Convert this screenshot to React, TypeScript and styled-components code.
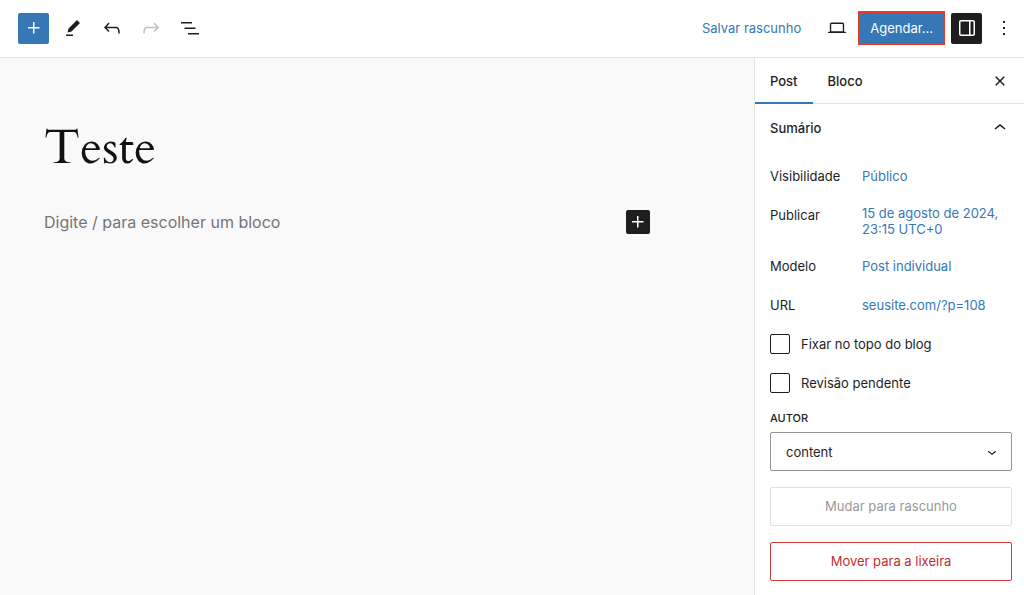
import React from "react";
import styled, { createGlobalStyle, css } from "styled-components";

const blue = "#3578b5";
const ink = "#1e1e1e";
const line = "#e4e4e4";

const GlobalStyle = createGlobalStyle`
  *, *::before, *::after { box-sizing: border-box; }
  body {
    margin: 0;
    background: #f9f9f9;
    color: ${ink};
    font-family: Inter, "Liberation Sans", sans-serif;
    font-size: 13px;
    line-height: 16px;
  }
  button, input, select { font: inherit; color: inherit; }
`;

const Page = styled.div`
  display: flex;
  flex-direction: column;
  min-height: 100vh;
`;

const TopBar = styled.header`
  display: flex;
  align-items: center;
  justify-content: space-between;
  padding: 11px 5px 12px 18px;
  background: #fff;
  border-bottom: 1px solid ${line};
`;

const Tools = styled.div`
  display: flex;
  align-items: center;
  gap: 8px;
`;

const Actions = styled.div`
  display: flex;
  align-items: center;
  gap: 6px;
`;

const IconButton = styled.button<{ $tone?: "primary" | "dark"; $small?: boolean }>`
  display: flex;
  align-items: center;
  justify-content: center;
  flex: none;
  width: ${(p) => (p.$small ? 24 : 31)}px;
  height: ${(p) => (p.$small ? 24 : 31)}px;
  padding: 0;
  border: 0;
  border-radius: 2px;
  background: ${(p) => (p.$tone === "primary" ? blue : p.$tone === "dark" ? ink : "transparent")};
  color: ${(p) => (p.$tone ? "#fff" : ink)};
  &:disabled { color: #c0c0c0; }
`;

const TextButton = styled.button`
  padding: 0 14px;
  border: 0;
  background: none;
  color: ${blue};
  line-height: 32px;
`;

const ScheduleButton = styled.button`
  padding: 0 10px;
  border: 2px solid #ee3a24;
  background: ${blue};
  color: #fff;
  line-height: 30px;
`;

const Workspace = styled.div`
  display: flex;
  flex: 1;
`;

const Canvas = styled.main`
  flex: 1;
  min-width: 0;
  padding: 60px 104px 40px 44px;
`;

const Title = styled.h1`
  margin: 0 0 32px;
  color: #111;
  font-family: Cardo, "Liberation Serif", serif;
  font-size: 49px;
  font-weight: 400;
  line-height: 60px;
`;

const BlockRow = styled.div`
  display: flex;
  align-items: center;
  gap: 16px;
`;

const BlockInput = styled.input`
  flex: 1;
  min-width: 0;
  padding: 0;
  border: 0;
  outline: 0;
  background: none;
  font-size: 16px;
  line-height: 24px;
  &::placeholder { color: #757575; opacity: 1; }
`;

const Sidebar = styled.aside`
  flex: none;
  width: 270px;
  background: #fff;
  border-left: 1px solid ${line};
`;

const TabBar = styled.div`
  display: flex;
  align-items: stretch;
  height: 46px;
  padding-right: 12px;
  border-bottom: 1px solid ${line};
`;

const Tab = styled.button<{ $active?: boolean }>`
  margin-bottom: -1px;
  padding: 0 15px;
  border: 0;
  background: none;
  font-weight: 500;
  ${(p) => p.$active && css`box-shadow: inset 0 -2px 0 ${blue};`}
`;

const TabClose = styled.div`
  display: flex;
  align-items: center;
  margin-left: auto;
`;

const Panel = styled.section`
  padding: 0 12px 15px 15px;
`;

const PanelTitle = styled.h2`
  margin: 0 0 8px;
  font-size: 13px;
  font-weight: 500;
`;

const PanelToggle = styled.button`
  display: flex;
  align-items: center;
  justify-content: space-between;
  width: 100%;
  height: 48px;
  padding: 0;
  border: 0;
  background: none;
  font-weight: 500;
`;

const Fields = styled.div`
  display: flex;
  flex-direction: column;
  gap: 8px;
`;

const Field = styled.div`
  display: flex;
  align-items: flex-start;
`;

const FieldLabel = styled.span`
  flex: none;
  width: 92px;
  padding-top: 8px;
`;

const FieldLink = styled.a`
  display: flex;
  align-items: center;
  min-height: 31px;
  padding: 6px 0 5px;
  color: ${blue};
  text-decoration: none;
`;

const CheckLabel = styled.label`
  display: flex;
  align-items: center;
  gap: 11px;
  height: 31px;
`;

const Checkbox = styled.input`
  appearance: none;
  width: 20px;
  height: 20px;
  margin: 0;
  border: 1px solid ${ink};
  border-radius: 2px;
  background: #fff;
  &:checked { background: ${blue}; }
`;

const AuthorLabel = styled.label`
  display: block;
  margin: 12px 0 6px;
  font-size: 11px;
  font-weight: 500;
  text-transform: uppercase;
`;

const SelectBox = styled.div`
  display: grid;
  align-items: center;
  > * { grid-area: 1 / 1; }
  > svg { justify-self: end; margin-right: 11px; pointer-events: none; }
`;

const Select = styled.select`
  appearance: none;
  width: 100%;
  height: 39px;
  padding: 0 32px 0 15px;
  border: 1px solid #949494;
  border-radius: 2px;
  background: #fff;
`;

const WideButton = styled.button<{ $danger?: boolean }>`
  display: block;
  width: 100%;
  height: 39px;
  margin-top: 16px;
  padding: 0 0 1px;
  border: 1px solid ${(p) => (p.$danger ? "#cc3d3a" : "#e0e0e0")};
  border-radius: 2px;
  background: #fff;
  color: ${(p) => (p.$danger ? "#c22f2b" : "#999")};
`;

const icons = {
  plus: "M11 12.5V17.5H12.5V12.5H17.5V11H12.5V6H11V11H6V12.5H11Z",
  edit: "m19 7-3-3-8.5 8.5-1 4 4-1L19 7Zm-7 11.5H5V20h7v-1.5Z",
  undo: "M18.3 11.7c-.6-.6-1.4-.9-2.3-.9H6.7l2.9-3.3-1.1-1-4.5 5L8.5 16l1-1-2.7-2.7H16c.5 0 .9.2 1.3.5 1 1 1 3.4 1 4.5v.3h1.5v-.2c0-1.5 0-4.3-1.5-5.7z",
  redo: "M15.6 6.5l-1.1 1 2.9 3.3H8c-.9 0-1.7.3-2.3.9-1.4 1.5-1.4 4.2-1.4 5.6v.2h1.5v-.3c0-1.1 0-3.5 1-4.5.3-.3.7-.5 1.3-.5h9.2L14.5 15l1.1 1.1 4.6-4.6-4.6-5z",
  list: "M3 6h11v1.5H3V6Zm3.5 5.5h11V13h-11v-1.5ZM21 17H10v1.5h11V17Z",
  laptop: "M20.5 16h-.7V8c0-1.1-.9-2-2-2H6.2c-1.1 0-2 .9-2 2v8h-.7c-.8 0-1.5.7-1.5 1.5h20c0-.8-.7-1.5-1.5-1.5zM5.7 8c0-.3.2-.5.5-.5h11.6c.3 0 .5.2.5.5v7.6H5.7V8z",
  drawer: "M18 4H6c-1.1 0-2 .9-2 2v12c0 1.1.9 2 2 2h12c1.1 0 2-.9 2-2V6c0-1.1-.9-2-2-2zm-4 14.5H6c-.3 0-.5-.2-.5-.5V6c0-.3.2-.5.5-.5h8v13zm4.5-.5c0 .3-.2.5-.5.5h-2.5v-13H18c.3 0 .5.2.5.5v12z",
  more: "M13 19h-2v-2h2v2zm0-6h-2v-2h2v2zm0-6h-2V5h2v2z",
  close: "M12 13.06l3.712 3.713 1.061-1.06L13.061 12l3.712-3.712-1.06-1.06L12 10.938 8.288 7.227l-1.061 1.06L10.939 12l-3.712 3.712 1.06 1.061L12 13.061z",
  up: "M6.5 12.4L12 8l5.5 4.4-.9 1.2L12 10l-4.5 3.6-1-1.2z",
  down: "M17.5 11.6L12 16l-5.5-4.4.9-1.2L12 14l4.5-3.6 1 1.2z",
};

function Icon({ name, size = 24 }: { name: keyof typeof icons; size?: number }) {
  return (
    <svg width={size} height={size} viewBox="0 0 24 24" fill="currentColor" aria-hidden="true">
      <path d={icons[name]} />
    </svg>
  );
}

const details = [
  { label: "Visibilidade", value: "Público" },
  { label: "Publicar", value: "15 de agosto de 2024, 23:15 UTC+0" },
  { label: "Modelo", value: "Post individual" },
  { label: "URL", value: "seusite.com/?p=108" },
];

export default function App() {
  return (
    <Page>
      <GlobalStyle />
      <TopBar>
        <Tools>
          <IconButton $tone="primary" aria-label="Adicionar bloco"><Icon name="plus" /></IconButton>
          <IconButton aria-label="Ferramentas"><Icon name="edit" /></IconButton>
          <IconButton aria-label="Desfazer"><Icon name="undo" /></IconButton>
          <IconButton aria-label="Refazer" disabled><Icon name="redo" /></IconButton>
          <IconButton aria-label="Visão geral"><Icon name="list" /></IconButton>
        </Tools>
        <Actions>
          <TextButton>Salvar rascunho</TextButton>
          <IconButton aria-label="Visualizar"><Icon name="laptop" size={22} /></IconButton>
          <ScheduleButton>Agendar...</ScheduleButton>
          <IconButton $tone="dark" aria-label="Configurações"><Icon name="drawer" /></IconButton>
          <IconButton aria-label="Opções"><Icon name="more" /></IconButton>
        </Actions>
      </TopBar>
      <Workspace>
        <Canvas>
          <Title>Teste</Title>
          <BlockRow>
            <BlockInput aria-label="Bloco vazio" placeholder="Digite / para escolher um bloco" />
            <IconButton $tone="dark" $small aria-label="Adicionar bloco"><Icon name="plus" /></IconButton>
          </BlockRow>
        </Canvas>
        <Sidebar>
          <TabBar>
            <Tab $active>Post</Tab>
            <Tab>Bloco</Tab>
            <TabClose>
              <IconButton $small aria-label="Fechar"><Icon name="close" /></IconButton>
            </TabClose>
          </TabBar>
          <Panel>
            <PanelTitle>
              <PanelToggle aria-expanded="true">Sumário<Icon name="up" /></PanelToggle>
            </PanelTitle>
            <Fields>
              {details.map((d) => (
                <Field key={d.label}>
                  <FieldLabel>{d.label}</FieldLabel>
                  <FieldLink href="#">{d.value}</FieldLink>
                </Field>
              ))}
              <CheckLabel><Checkbox type="checkbox" />Fixar no topo do blog</CheckLabel>
              <CheckLabel><Checkbox type="checkbox" />Revisão pendente</CheckLabel>
            </Fields>
            <AuthorLabel htmlFor="author">Autor</AuthorLabel>
            <SelectBox>
              <Select id="author" defaultValue="content">
                <option value="content">content</option>
              </Select>
              <Icon name="down" size={18} />
            </SelectBox>
            <WideButton disabled>Mudar para rascunho</WideButton>
            <WideButton $danger>Mover para a lixeira</WideButton>
          </Panel>
        </Sidebar>
      </Workspace>
    </Page>
  );
}
